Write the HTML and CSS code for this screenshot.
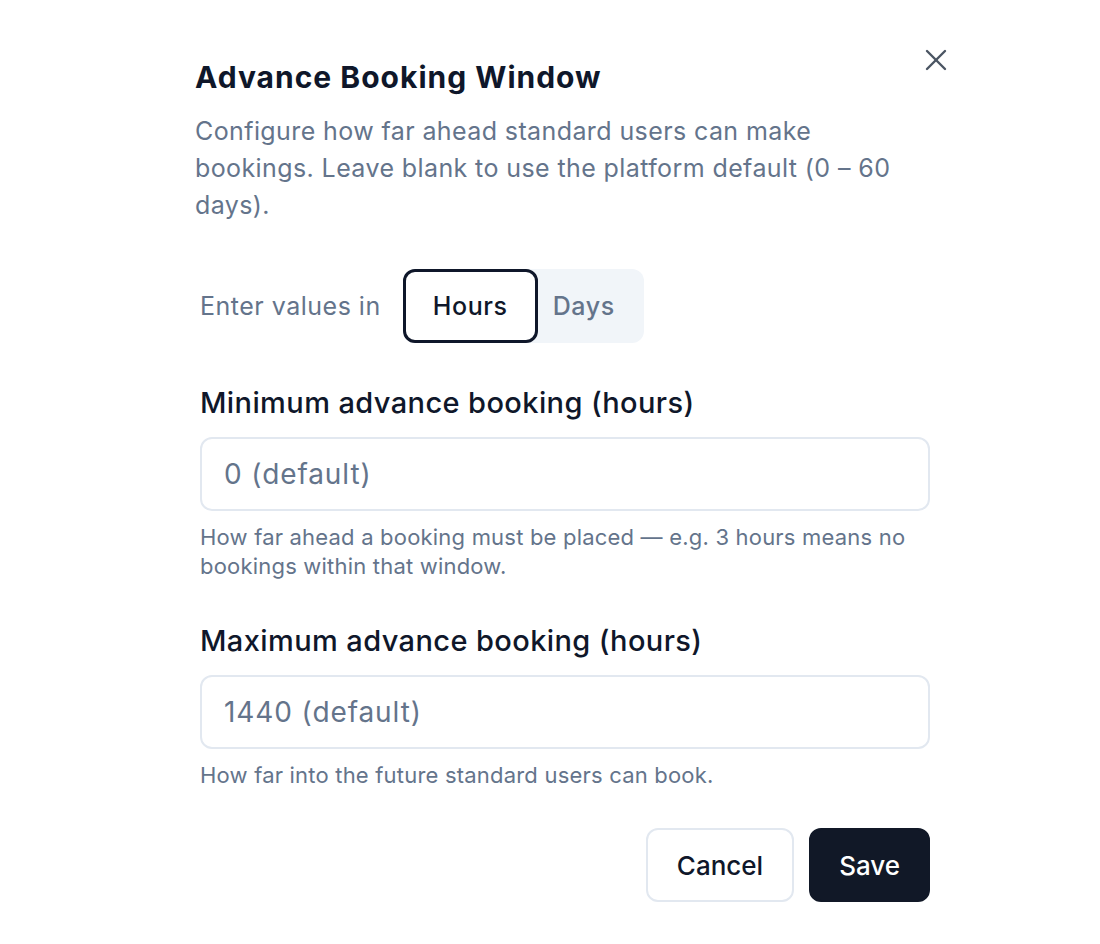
FILE: index.html
```html
<!DOCTYPE html>
<html>
<head>
    <title>Advance Booking Window</title>
    <link rel="stylesheet" href="styles.css">
</head>
<body>
    <div class="dialog">
        <button class="close-button" aria-label="Close">
            <svg width="36" height="36" viewBox="0 0 24 24" fill="none" stroke="currentColor" stroke-width="1.6" stroke-linecap="round">
                <path d="M18 6 6 18"/>
                <path d="M6 6l12 12"/>
            </svg>
        </button>

        <div class="dialog-header">
            <h2 class="dialog-title">Advance Booking Window</h2>
            <p class="dialog-description">Configure how far ahead standard users can make bookings. Leave blank to use the platform default (0 – 60 days).</p>
        </div>

        <div class="dialog-body">
            <div class="unit-row">
                <span class="unit-label">Enter values in</span>
                <div class="toggle-group">
                    <button class="toggle-item active">Hours</button>
                    <button class="toggle-item">Days</button>
                </div>
            </div>

            <div class="field">
                <label class="field-label" for="min-advance">Minimum advance booking (hours)</label>
                <input class="field-input" id="min-advance" type="text" placeholder="0 (default)">
                <p class="field-help">How far ahead a booking must be placed — e.g. 3 hours means no bookings within that window.</p>
            </div>

            <div class="field">
                <label class="field-label" for="max-advance">Maximum advance booking (hours)</label>
                <input class="field-input" id="max-advance" type="text" placeholder="1440 (default)">
                <p class="field-help">How far into the future standard users can book.</p>
            </div>

            <div class="dialog-footer">
                <button class="btn btn-outline">Cancel</button>
                <button class="btn btn-primary">Save</button>
            </div>
        </div>
    </div>
</body>
</html>
```

FILE: styles.css
```css
/* Halaman dasar */
body {
    margin: 0;
    background: #ffffff;
    font-family: Inter, "Noto Sans", sans-serif;
    color: #0f172a;
}

.dialog {
    position: relative;
    width: 735px;
    margin-left: 195px;
    padding-top: 59px;
}

.close-button {
    position: absolute;
    top: 42px;
    right: -24px;
    width: 36px;
    height: 36px;
    padding: 0;
    border: none;
    background: none;
    color: #4b5563;
    cursor: pointer;
}

.close-button svg {
    display: block;
}

/* Judul dan deskripsi */
.dialog-title {
    margin: 0;
    font-size: 30px;
    line-height: 36px;
    font-weight: 700;
    letter-spacing: 1px;
}

.dialog-description {
    margin: 18px 0 0;
    font-size: 25px;
    line-height: 37px;
    letter-spacing: 0.4px;
    color: #64748b;
}

.dialog-body {
    padding-left: 5px;
}

/* Pilihan satuan */
.unit-row {
    display: flex;
    align-items: center;
    gap: 22px;
    margin-top: 45px;
}

.unit-label {
    font-size: 25px;
    letter-spacing: 0.5px;
    color: #64748b;
}

.toggle-group {
    display: flex;
    background: #f1f5f9;
    border-radius: 12px;
    height: 74px;
}

.toggle-item {
    font-family: inherit;
    font-size: 25px;
    font-weight: 500;
    letter-spacing: 0.6px;
    border: none;
    background: none;
    color: #64748b;
    padding: 0 29px 0 15px;
    cursor: pointer;
}

.toggle-item.active {
    background: #ffffff;
    color: #0f172a;
    border: 3px solid #0f172a;
    border-radius: 12px;
    padding: 0;
    width: 135px;
}

/* Isian */
.field {
    margin-top: 42px;
}

.field-label {
    display: block;
    font-size: 29px;
    line-height: 36px;
    font-weight: 500;
    letter-spacing: 0.4px;
}

.field-input {
    display: block;
    box-sizing: border-box;
    width: 100%;
    height: 74px;
    margin-top: 16px;
    padding: 0 22px;
    border: 2px solid #e2e8f0;
    border-radius: 12px;
    font-family: inherit;
    font-size: 28px;
    letter-spacing: 0.9px;
    color: #0f172a;
    outline: none;
}

.field-input::placeholder {
    color: #64748b;
}

.field-help {
    margin: 12px 0 0;
    font-size: 22px;
    line-height: 29px;
    letter-spacing: 0.2px;
    color: #64748b;
}

/* Tombol bawah */
.dialog-footer {
    display: flex;
    justify-content: flex-end;
    gap: 15px;
    margin-top: 38px;
}

.btn {
    box-sizing: border-box;
    height: 74px;
    padding: 0 29px;
    border-radius: 12px;
    font-family: inherit;
    font-size: 26px;
    font-weight: 500;
    cursor: pointer;
}

.btn-outline {
    background: #ffffff;
    color: #0f172a;
    border: 2px solid #e2e8f0;
}

.btn-primary {
    padding: 0 28px;
    background: #111827;
    color: #ffffff;
    border: 2px solid #111827;
}
```
